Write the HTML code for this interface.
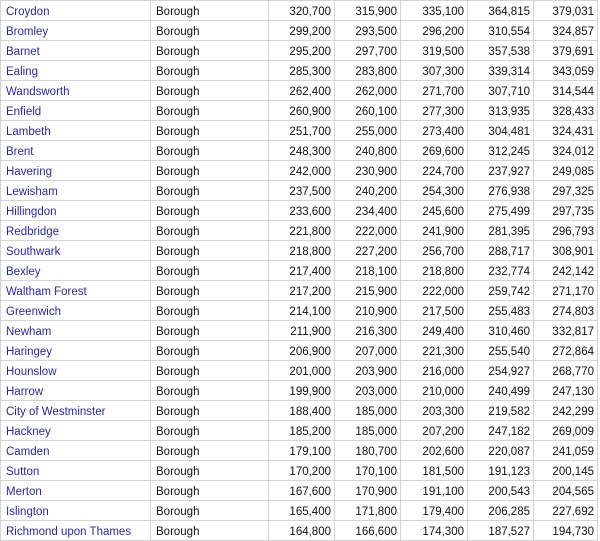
<!DOCTYPE html>
<html><head><style>
html,body{margin:0;padding:0;background:#fff;width:600px;height:541px;overflow:hidden}
table{border-collapse:collapse;table-layout:fixed;position:absolute;left:0;top:0;font-family:"Liberation Sans",sans-serif;font-size:11.5px;color:#111}
td{border:1px solid #d4d4d4;height:16px;padding:3px 4px 0 4px;white-space:nowrap;overflow:hidden;line-height:16px}
td.n{color:#2a2a9c;padding-left:5px}
td.b{padding-left:5px}
td.r{text-align:right;padding-right:3px}
</style></head><body>
<table>
<colgroup><col style="width:150px"><col style="width:118px"><col style="width:66px"><col style="width:66px"><col style="width:67px"><col style="width:66px"><col style="width:64px"></colgroup>
<tbody id="t">
<tr><td class="n">Croydon</td><td class="b">Borough</td><td class="r">320,700</td><td class="r">315,900</td><td class="r">335,100</td><td class="r">364,815</td><td class="r">379,031</td></tr>
<tr><td class="n">Bromley</td><td class="b">Borough</td><td class="r">299,200</td><td class="r">293,500</td><td class="r">296,200</td><td class="r">310,554</td><td class="r">324,857</td></tr>
<tr><td class="n">Barnet</td><td class="b">Borough</td><td class="r">295,200</td><td class="r">297,700</td><td class="r">319,500</td><td class="r">357,538</td><td class="r">379,691</td></tr>
<tr><td class="n">Ealing</td><td class="b">Borough</td><td class="r">285,300</td><td class="r">283,800</td><td class="r">307,300</td><td class="r">339,314</td><td class="r">343,059</td></tr>
<tr><td class="n">Wandsworth</td><td class="b">Borough</td><td class="r">262,400</td><td class="r">262,000</td><td class="r">271,700</td><td class="r">307,710</td><td class="r">314,544</td></tr>
<tr><td class="n">Enfield</td><td class="b">Borough</td><td class="r">260,900</td><td class="r">260,100</td><td class="r">277,300</td><td class="r">313,935</td><td class="r">328,433</td></tr>
<tr><td class="n">Lambeth</td><td class="b">Borough</td><td class="r">251,700</td><td class="r">255,000</td><td class="r">273,400</td><td class="r">304,481</td><td class="r">324,431</td></tr>
<tr><td class="n">Brent</td><td class="b">Borough</td><td class="r">248,300</td><td class="r">240,800</td><td class="r">269,600</td><td class="r">312,245</td><td class="r">324,012</td></tr>
<tr><td class="n">Havering</td><td class="b">Borough</td><td class="r">242,000</td><td class="r">230,900</td><td class="r">224,700</td><td class="r">237,927</td><td class="r">249,085</td></tr>
<tr><td class="n">Lewisham</td><td class="b">Borough</td><td class="r">237,500</td><td class="r">240,200</td><td class="r">254,300</td><td class="r">276,938</td><td class="r">297,325</td></tr>
<tr><td class="n">Hillingdon</td><td class="b">Borough</td><td class="r">233,600</td><td class="r">234,400</td><td class="r">245,600</td><td class="r">275,499</td><td class="r">297,735</td></tr>
<tr><td class="n">Redbridge</td><td class="b">Borough</td><td class="r">221,800</td><td class="r">222,000</td><td class="r">241,900</td><td class="r">281,395</td><td class="r">296,793</td></tr>
<tr><td class="n">Southwark</td><td class="b">Borough</td><td class="r">218,800</td><td class="r">227,200</td><td class="r">256,700</td><td class="r">288,717</td><td class="r">308,901</td></tr>
<tr><td class="n">Bexley</td><td class="b">Borough</td><td class="r">217,400</td><td class="r">218,100</td><td class="r">218,800</td><td class="r">232,774</td><td class="r">242,142</td></tr>
<tr><td class="n">Waltham Forest</td><td class="b">Borough</td><td class="r">217,200</td><td class="r">215,900</td><td class="r">222,000</td><td class="r">259,742</td><td class="r">271,170</td></tr>
<tr><td class="n">Greenwich</td><td class="b">Borough</td><td class="r">214,100</td><td class="r">210,900</td><td class="r">217,500</td><td class="r">255,483</td><td class="r">274,803</td></tr>
<tr><td class="n">Newham</td><td class="b">Borough</td><td class="r">211,900</td><td class="r">216,300</td><td class="r">249,400</td><td class="r">310,460</td><td class="r">332,817</td></tr>
<tr><td class="n">Haringey</td><td class="b">Borough</td><td class="r">206,900</td><td class="r">207,000</td><td class="r">221,300</td><td class="r">255,540</td><td class="r">272,864</td></tr>
<tr><td class="n">Hounslow</td><td class="b">Borough</td><td class="r">201,000</td><td class="r">203,900</td><td class="r">216,000</td><td class="r">254,927</td><td class="r">268,770</td></tr>
<tr><td class="n">Harrow</td><td class="b">Borough</td><td class="r">199,900</td><td class="r">203,000</td><td class="r">210,000</td><td class="r">240,499</td><td class="r">247,130</td></tr>
<tr><td class="n">City of Westminster</td><td class="b">Borough</td><td class="r">188,400</td><td class="r">185,000</td><td class="r">203,300</td><td class="r">219,582</td><td class="r">242,299</td></tr>
<tr><td class="n">Hackney</td><td class="b">Borough</td><td class="r">185,200</td><td class="r">185,000</td><td class="r">207,200</td><td class="r">247,182</td><td class="r">269,009</td></tr>
<tr><td class="n">Camden</td><td class="b">Borough</td><td class="r">179,100</td><td class="r">180,700</td><td class="r">202,600</td><td class="r">220,087</td><td class="r">241,059</td></tr>
<tr><td class="n">Sutton</td><td class="b">Borough</td><td class="r">170,200</td><td class="r">170,100</td><td class="r">181,500</td><td class="r">191,123</td><td class="r">200,145</td></tr>
<tr><td class="n">Merton</td><td class="b">Borough</td><td class="r">167,600</td><td class="r">170,900</td><td class="r">191,100</td><td class="r">200,543</td><td class="r">204,565</td></tr>
<tr><td class="n">Islington</td><td class="b">Borough</td><td class="r">165,400</td><td class="r">171,800</td><td class="r">179,400</td><td class="r">206,285</td><td class="r">227,692</td></tr>
<tr><td class="n">Richmond upon Thames</td><td class="b">Borough</td><td class="r">164,800</td><td class="r">166,600</td><td class="r">174,300</td><td class="r">187,527</td><td class="r">194,730</td></tr>
</tbody></table>
</body></html>
